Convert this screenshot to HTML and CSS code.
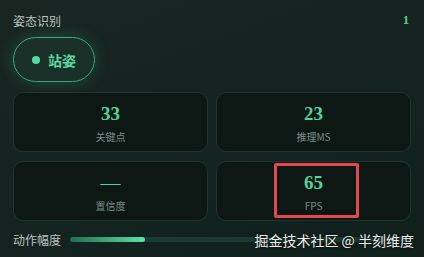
FILE: index.html
```html
<!DOCTYPE html>
<html lang="zh">
<head>
  <meta charset="UTF-8">
  <title>姿态识别</title>
  <link rel="stylesheet" href="styles.css">
</head>
<body>
  <div class="panel">
    <div class="head">
      <span class="title">姿态识别</span>
      <span class="count">1</span>
    </div>

    <div class="pose-pill"><span class="dot"></span>站姿</div>

    <div class="stats">
      <div class="stat">
        <div class="num">33</div>
        <div class="label">关键点</div>
      </div>
      <div class="stat">
        <div class="num">23</div>
        <div class="label">推理MS</div>
      </div>
      <div class="stat">
        <div class="num dash">—</div>
        <div class="label">置信度</div>
      </div>
      <div class="stat">
        <div class="num">65</div>
        <div class="label">FPS</div>
        <div class="mark"></div>
      </div>
    </div>

    <div class="motion">
      <span class="motion-label">动作幅度</span>
      <div class="track"><div class="fill" style="width: 22%"></div></div>
    </div>

    <div class="watermark">掘金技术社区 @ 半刻维度</div>
  </div>
</body>
</html>
```

FILE: styles.css
```css
html, body {
  margin: 0;
  height: 100%;
}

body {
  background: linear-gradient(160deg, #1a2522 0%, #132320 60%, #10201b 100%);
  color: #b7c2be;
  font-family: "Noto Sans CJK SC", "Noto Sans", sans-serif;
  overflow: hidden;
}

.panel {
  position: relative;
  padding: 12px 13px 0 13px;
}

.head {
  display: flex;
  justify-content: space-between;
  align-items: center;
  height: 16px;
}

.title {
  font-size: 12px;
  color: #b9c3bf;
}

.count {
  font-family: "Liberation Serif", serif;
  font-weight: bold;
  font-size: 12px;
  color: #56d69c;
  padding-right: 2px;
}

.pose-pill {
  margin-top: 9px;
  width: 82px;
  height: 45px;
  box-sizing: border-box;
  border: 1px solid #3aa97c;
  border-radius: 23px;
  background: rgba(40, 130, 95, 0.14);
  box-shadow: 0 0 16px rgba(50, 190, 130, 0.28);
  display: flex;
  align-items: center;
  justify-content: center;
  gap: 8px;
  font-size: 14px;
  font-weight: bold;
  color: #5ad8a0;
}

.dot {
  width: 8px;
  height: 8px;
  border-radius: 50%;
  background: #55dc9e;
}

.stats {
  margin-top: 10px;
  display: grid;
  grid-template-columns: 1fr 1fr;
  column-gap: 8px;
  row-gap: 9px;
}

.stat {
  position: relative;
  height: 60px;
  box-sizing: border-box;
  border: 1px solid #22342e;
  border-radius: 10px;
  background: #0d1815;
  display: flex;
  flex-direction: column;
  align-items: center;
  padding-top: 9px;
}

.num {
  font-family: "Liberation Serif", serif;
  font-weight: bold;
  font-size: 19px;
  line-height: 24px;
  color: #52d49b;
}

.num.dash {
  font-weight: normal;
  font-size: 20px;
}

.label {
  font-size: 10px;
  line-height: 16px;
  margin-top: 3px;
  color: #7d8a85;
}

.mark {
  position: absolute;
  left: 57px;
  top: 1px;
  width: 85px;
  height: 55px;
  box-sizing: border-box;
  border: 3px solid #e3484e;
  border-radius: 2px;
}

.motion {
  margin-top: 11px;
  display: flex;
  align-items: center;
  gap: 9px;
  height: 14px;
}

.motion-label {
  font-size: 12px;
  color: #b9c3bf;
  white-space: nowrap;
}

.track {
  flex: 1;
  height: 5px;
  border-radius: 3px;
  background: #1b3a30;
}

.fill {
  height: 100%;
  border-radius: 3px;
  background: linear-gradient(90deg, #1f6f50, #5fe0a4);
}

.watermark {
  position: absolute;
  right: 10px;
  top: 230px;
  font-size: 14px;
  color: #ececec;
  text-shadow: 0 0 3px rgba(0, 0, 0, 0.8);
  white-space: nowrap;
}
```
